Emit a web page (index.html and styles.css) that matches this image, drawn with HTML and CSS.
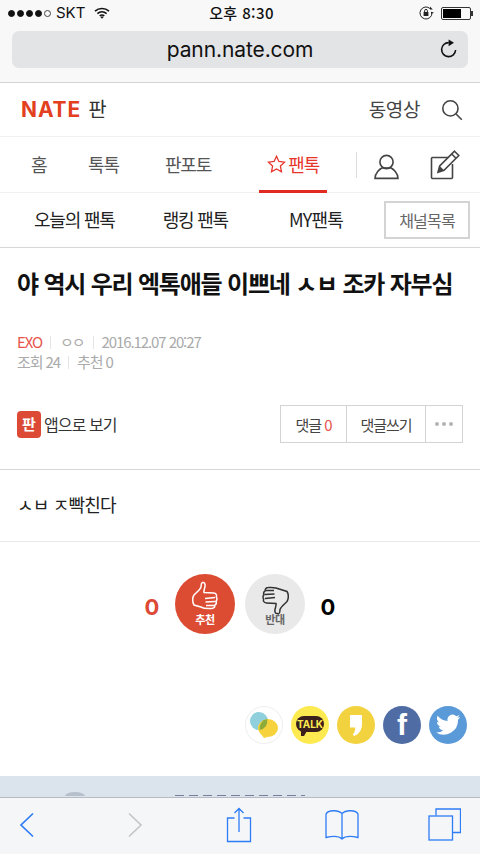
FILE: index.html
```html
<!DOCTYPE html>
<html lang="ko">
<head>
<meta charset="utf-8">
<title>pann.nate.com</title>
<link rel="stylesheet" href="styles.css">
</head>
<body>
<div class="screen">
  <div class="chrome">
    <div class="status">
      <div class="status-left">
        <span class="dots"><i></i><i></i><i></i><i></i><i class="off"></i></span>
        <span class="carrier">SKT</span>
        <svg class="wifi" width="16" height="12" viewBox="0 0 16 12"><path d="M1 4.200C5 .6 11 .6 15 4.200M3.400 6.600c2.700-2.300 6.500-2.300 9.200 0M5.700 8.900c1.400-1.100 3.200-1.100 4.600 0" fill="none" stroke="#111" stroke-width="1.600"/><path d="M8 11.800 6.400 10c1-.6 2.200-.6 3.200 0z" fill="#111"/></svg>
      </div>
      <div class="status-time">오후 8:30</div>
      <div class="status-right">
        <svg width="16" height="14" viewBox="0 0 16 14"><path d="M13 7a6 6 0 1 1-1.800-4.300" fill="none" stroke="#222" stroke-width="1"/><path d="M11 .6v3h2.800zM12 8l3-1.600-3-.6z" fill="#222"/><rect x="4.600" y="6" width="4.800" height="4" fill="#222"/><path d="M5.600 6V4.800a1.400 1.400 0 0 1 2.800 0V6" fill="none" stroke="#222"/></svg>
        <span class="battery"><span class="battery-fill"></span></span>
      </div>
    </div>
    <div class="urlbar">
      <span class="url">pann.nate.com</span>
      <svg class="reload" width="18" height="20" viewBox="0 0 18 20"><path d="M15.600 11a7 7 0 1 1-6.800-7.400" fill="none" stroke="#111" stroke-width="1.600"/><path d="M8.600 .4 14 3.800 8.600 7.200z" fill="#111"/></svg>
    </div>
  </div>

  <header class="top">
    <div class="brand"><span class="logo">NATE</span><span class="brand-name">판</span></div>
    <div class="top-right">
      <span class="video">동영상</span>
      <svg width="22" height="22" viewBox="0 0 22 22"><circle cx="9.400" cy="9.400" r="7.600" fill="none" stroke="#444" stroke-width="1.600"/><path d="m14.800 14.800 6 6" stroke="#444" stroke-width="1.600"/></svg>
    </div>
  </header>

  <nav class="gnb">
    <a class="gnb-item gnb-home">홈</a>
    <a class="gnb-item gnb-talk">톡톡</a>
    <a class="gnb-item gnb-photo">판포토</a>
    <a class="gnb-item gnb-fan">
      <svg width="19" height="18" viewBox="0 0 19 18"><path d="m9.500 1.300 2.400 5.200 5.700.7-4.200 3.900 1.100 5.600-5-2.800-5 2.800 1.100-5.600L1.400 7.200l5.700-.7z" fill="none" stroke="#e8352b" stroke-width="1.300"/></svg>
      <span>팬톡</span>
    </a>
    <span class="gnb-sep"></span>
    <svg class="gnb-user" width="25" height="26" viewBox="0 0 25 26"><circle cx="12.500" cy="8" r="6.600" fill="none" stroke="#444" stroke-width="1.600"/><path d="M1 24.400c0-5.600 5-9.400 6.800-10.400h9.400c1.800 1 6.800 4.800 6.800 10.400z" fill="none" stroke="#444" stroke-width="1.600"/></svg>
    <svg class="gnb-edit" width="30" height="30" viewBox="0 0 30 30"><path d="M18 7.500H2.500a1 1 0 0 0-1 1v19a1 1 0 0 0 1 1h19a1 1 0 0 0 1-1V14" fill="none" stroke="#444" stroke-width="1.600"/><path d="m24.500 1.200 4.300 4.300-14.800 14.800-6 2 1.700-6.300zM21.700 4l4.300 4.300" fill="none" stroke="#444" stroke-width="1.600"/><path d="m8 22.300 1.700-6.300 4.300 4.300z" fill="#444"/></svg>
  </nav>

  <nav class="sub">
    <a class="sub-item sub-today">오늘의 팬톡</a>
    <a class="sub-item sub-rank">랭킹 팬톡</a>
    <a class="sub-item sub-my">MY팬톡</a>
    <a class="channel">채널목록</a>
  </nav>

  <main>
    <h1 class="title">야 역시 우리 엑톡애들 이쁘네 ㅅㅂ 조카 자부심</h1>
    <div class="meta">
      <div class="meta-line"><span class="cat">EXO</span><i></i><span class="author">ㅇㅇ</span><i></i><span>2016.12.07 20:27</span></div>
      <div class="meta-line"><span>조회 24</span><i></i><span>추천 0</span></div>
    </div>
    <div class="actions">
      <div class="app">
        <span class="app-icon">판</span>
        <span>앱으로 보기</span>
      </div>
      <div class="btns">
        <a class="btn btn-count">댓글 <em>0</em></a>
        <a class="btn btn-write">댓글쓰기</a>
        <a class="btn btn-more"><i></i><i></i><i></i></a>
      </div>
    </div>
    <div class="body-text">ㅅㅂ ㅈ빡친다</div>
    <div class="vote">
      <span class="vote-num up">0</span>
      <div class="vote-btn vote-up">
        <svg width="28" height="34" viewBox="0 0 28 34"><path d="M11.500 1.500c2-.5 3 1.500 2.500 4-.4 2-1.400 4-1 6l9.500.5c3 .2 3.500 2.500 2.800 4 1.200 1.500.7 3.500-.3 4.300.8 1.700 0 3.200-1.200 3.900.2 2-1 3.200-3 3.300-4 .3-8 .3-11-1.500L3 24c-2-3-1.500-8 0-10 3-3 6-5 7-8 .4-1.500-.5-4 1.500-4.500z" fill="none" stroke="#fff" stroke-width="1.500"/><path d="M14 17.500l10-1M14.500 21l10-.5M15 24.500l8.500 0" fill="none" stroke="#fff" stroke-width="1.300"/></svg>
        <span>추천</span>
      </div>
      <div class="vote-btn vote-down">
        <svg width="28" height="34" viewBox="0 0 28 34"><path d="M16.500 32.500c-2 .5-3-1.500-2.500-4 .4-2 1.400-4 1-6l-9.500-.5c-3-.2-3.500-2.500-2.800-4-1.200-1.500-.7-3.500.3-4.300-.8-1.700 0-3.200 1.200-3.900-.2-2 1-3.200 3-3.300 4-.3 8-.3 11 1.500l7.800 2.500c2 3 1.500 8 0 10-3 3-6 5-7 8-.4 1.500.5 4-1.500 4.500z" fill="none" stroke="#333" stroke-width="1.500"/><path d="M14 16.500l-10 1M13.500 13l-10 .5M13 9.500l-8.500 0" fill="none" stroke="#333" stroke-width="1.300"/></svg>
        <span>반대</span>
      </div>
      <span class="vote-num down">0</span>
    </div>
    <div class="share">
      <span class="sns sns-msg"><svg width="30" height="28" viewBox="0 0 30 28"><circle cx="10" cy="10" r="9" fill="#8fd0dc"/><ellipse cx="19" cy="17" rx="10" ry="9" fill="#f6d33c"/><path d="M12 23l3 4 4-1z" fill="#f6d33c"/><path d="M10.600 19a9 9 0 0 0 7.500-10.900 9.400 9.400 0 0 0-7.500 10.900z" fill="#8cab3a"/></svg></span>
      <span class="sns sns-kakao"><span class="talk">TALK</span></span>
      <span class="sns sns-quote"><svg width="12" height="21" viewBox="0 0 12 21"><path d="M0 0H12V9C12 15 9 19 4 21L2.800 19.400C4.500 17.500 5.300 15.500 5.300 12.500H0z" fill="#fff"/></svg></span>
      <span class="sns sns-fb">f</span>
      <span class="sns sns-tw"><svg width="26" height="22" viewBox="0 0 26 22"><path d="M25 3c-.9.400-1.900.7-2.800.8 1-.6 1.800-1.600 2.200-2.700-1 .6-2 1-3.100 1.200A5 5 0 0 0 12.700 7C8.600 6.800 5 4.800 2.600 1.800 1.300 4 2 6.900 4.100 8.300c-.8 0-1.500-.2-2.200-.6 0 2.400 1.700 4.500 4 5-.7.200-1.500.2-2.200.1.600 2 2.500 3.400 4.600 3.500A10 10 0 0 1 1 18.400 14.300 14.300 0 0 0 23 5.800c1-.7 1.700-1.700 2-2.800z" fill="#fff"/></svg></span>
    </div>
    <div class="ad"><span class="ad-emblem"></span><span class="ad-line"></span></div>
  </main>

  <footer class="toolbar">
    <svg class="tb-back" width="16" height="26" viewBox="0 0 16 26"><path d="M14 1.500 2 13l12 11.500" fill="none" stroke="#2e7cf6" stroke-width="1.700"/></svg>
    <svg class="tb-fwd" width="16" height="26" viewBox="0 0 16 26"><path d="m2 1.500 12 11.500L2 24.500" fill="none" stroke="#c4c6c8" stroke-width="1.700"/></svg>
    <svg class="tb-share" width="26" height="36" viewBox="0 0 26 36"><path d="M8.500 11H1.500v23.500h23V11h-7M13 25V1.500M8.500 6 13 1.500 17.500 6" fill="none" stroke="#2e7cf6" stroke-width="1.300"/></svg>
    <svg class="tb-book" width="34" height="32" viewBox="0 0 34 32"><path d="M17 30c-3-3-10-3-16-1.500V5C3 1 13 .5 17 4.500 21 .5 31 1 33 5v23.500C27 27 20 27 17 30zM17 4.500V30" fill="none" stroke="#2e7cf6" stroke-width="1.300"/></svg>
    <svg class="tb-tabs" width="33" height="33" viewBox="0 0 33 33"><path d="M8 7.500V1h24.500v23.500H25" fill="none" stroke="#2e7cf6" stroke-width="1.300"/><rect x="1" y="8" width="23.500" height="24" fill="none" stroke="#2e7cf6" stroke-width="1.300"/></svg>
  </footer>
</div>
</body>
</html>
```

FILE: styles.css
```css
* { box-sizing: border-box; }
html, body { margin: 0; padding: 0; }
body { background: #fff; font-family: "Noto Sans CJK KR", "Noto Sans", sans-serif; color: #222; }
a { color: inherit; text-decoration: none; }
i, em { font-style: normal; }
.screen { position: relative; width: 480px; height: 854px; overflow: hidden; background: #fff; }

.chrome { height: 83px; background: #f8f8f8; border-bottom: 1px solid #d4d4d4; padding: 0 12px; }
.status { position: relative; height: 31px; display: flex; justify-content: space-between; align-items: center; margin: 0 -4px; padding-bottom: 5px; }
.status-left { display: flex; align-items: center; gap: 4px; }
.dots { display: flex; gap: 2px; }
.dots i { width: 7px; height: 7px; border-radius: 50%; background: #111; border: 1px solid #111; }
.dots i.off { background: transparent; border-color: #444; }
.carrier { font: 15px/18px "Inter", "Liberation Sans", sans-serif; color: #111; margin-left: 1px; }
.wifi { margin-left: 5px; }
.status-time { position: absolute; left: 3px; right: 0; text-align: center; font-size: 15px; line-height: 20px; font-weight: 500; color: #111; top: 3px; letter-spacing: .4px; }
.status-right { display: flex; align-items: center; gap: 6px; margin-right: -1px; position: relative; }
.battery { display: block; position: relative; width: 30px; height: 13px; border: 1px solid #333; border-radius: 2px; padding: 1px; margin-right: 2px; }
.battery::after { content: ""; position: absolute; right: -3px; top: 3px; width: 2px; height: 5px; background: #333; }
.battery-fill { display: block; width: 18px; height: 100%; background: #000; }
.urlbar { position: relative; height: 37px; background: #e3e4e6; border-radius: 7px; display: flex; align-items: center; justify-content: center; }
.url { font: 21px/26px "Inter", "Liberation Sans", sans-serif; color: #111; letter-spacing: -.1px; }
.reload { position: absolute; right: 10px; top: 8px; }

.top { height: 54px; display: flex; justify-content: space-between; align-items: center; padding: 0 17px 0 21px; border-bottom: 1px solid #f0f0f0; }
.brand { display: flex; align-items: center; gap: 7px; }
.logo { font: 700 21px/24px "Inter", "Liberation Sans", sans-serif; color: #e2401f; letter-spacing: .9px; }
.brand-name { font-size: 20px; line-height: 24px; color: #333; margin-top: -2px; }
.top-right { display: flex; align-items: center; gap: 21px; }
.video { font-size: 19px; line-height: 24px; letter-spacing: -.4px; color: #444; margin-top: -2px; }

.gnb { position: relative; height: 56px; display: flex; align-items: center; border-bottom: 1px solid #f0f0f0; white-space: nowrap; }
.gnb > * { flex-shrink: 0; }
.gnb-item { font-size: 18px; line-height: 24px; letter-spacing: -1.1px; color: #555; display: flex; align-items: center; padding-bottom: 2px; }
.gnb-home { margin-left: 31px; }
.gnb-talk { margin-left: 41.5px; }
.gnb-photo { margin-left: 46px; }
.gnb-fan { position: relative; margin-left: 56px; gap: 2px; color: #e8352b; height: 100%; padding-bottom: 2px; }
.gnb-fan::after { content: ""; position: absolute; left: -8px; right: -8px; bottom: -1px; height: 3px; background: #e02a22; }
.gnb-sep { width: 1px; height: 26px; background: #ddd; margin-left: 37px; }
.gnb-user { margin-left: 17px; margin-top: 4px; }
.gnb-edit { margin-left: 31px; margin-top: 1px; }

.sub { position: relative; height: 55px; display: flex; align-items: center; border-bottom: 1px solid #d8d8d8; white-space: nowrap; }
.sub > * { flex-shrink: 0; }
.sub-item { font-size: 18px; line-height: 24px; letter-spacing: -1.2px; color: #222; padding-bottom: 2px; }
.sub-today { margin-left: 34px; }
.sub-rank { margin-left: 48px; }
.sub-my { margin-left: 61px; letter-spacing: -.8px; }
.channel { margin-left: 41px; width: 86px; height: 38px; border: 2px solid #d4d4d4; text-align: center; font-size: 16px; line-height: 34px; letter-spacing: -.8px; color: #666; }

.title { margin: 0; padding: 19px 17px 0; height: 84px; font-size: 24px; line-height: 32px; font-weight: 700; letter-spacing: -1.2px; color: #111; white-space: nowrap; }
.meta { height: 61px; padding-left: 17px; font-size: 15px; line-height: 20px; letter-spacing: -1.1px; color: #aaa; }
.meta-line { display: flex; align-items: center; }
.meta-line i { width: 1px; height: 13px; background: #e4e4e4; margin: 0 8px; }
.cat { color: #e8544c; }
.author { letter-spacing: -2px; margin: 0 1px; }
.actions { height: 77px; border-bottom: 1px solid #d8d8d8; display: flex; justify-content: space-between; padding: 12px 17px 0; }
.app { display: flex; align-items: center; gap: 3px; height: 38px; font-size: 16px; letter-spacing: -.9px; color: #333; }
.app-icon { width: 24px; height: 27px; border-radius: 4px; background: #dc4a35; color: #fff; font-size: 15px; font-weight: 700; text-align: center; line-height: 26px; letter-spacing: 0; }
.btns { display: flex; height: 38px; border: 1px solid #d4d4d4; font-size: 15px; letter-spacing: -1px; color: #444; }
.btn { display: flex; align-items: center; justify-content: center; height: 100%; }
.btn em { color: #e8544c; margin-left: 3px; }
.btn-count { width: 65px; }
.btn-write { width: 79px; border-left: 1px solid #d4d4d4; }
.btn-more { width: 37px; border-left: 1px solid #d4d4d4; gap: 3px; }
.btn-more i { width: 4px; height: 4px; border-radius: 50%; background: #b4b4b4; }
.body-text { height: 72px; border-bottom: 1px solid #e8e8e8; padding-left: 17px; font-size: 18px; line-height: 68px; letter-spacing: -.8px; color: #222; }
.vote { height: 134px; display: flex; justify-content: center; align-items: flex-start; padding-top: 32px; }
.vote-num { font: 700 22px/66px "Inter", "Liberation Sans", sans-serif; width: 20px; text-align: center; }
.vote-num.up { color: #dc4a35; margin-right: 13px; }
.vote-num.down { color: #000; margin-left: 13px; }
.vote-btn { width: 60px; height: 60px; border-radius: 50%; display: flex; flex-direction: column; align-items: center; font-size: 11px; line-height: 14px; font-weight: 700; letter-spacing: -.3px; padding-top: 7px; }
.vote-up { background: #dc4c33; color: #fff; margin-right: 10px; }
.vote-down { background: #e9e9e9; color: #666; }
.vote-btn span { margin-top: -3px; }
.share { height: 100px; display: flex; justify-content: flex-end; gap: 8px; padding: 30px 13px 0 0; }
.sns { width: 38px; height: 38px; border-radius: 50%; display: flex; align-items: center; justify-content: center; }
.sns-msg { background: #fff; border: 1px solid #eee; }
.sns-kakao { background: #fdea50; }
.talk { position: relative; background: #3a1f1d; color: #fdea50; font: 700 10px/16px "Inter", "Liberation Sans", sans-serif; border-radius: 9px; width: 28px; text-align: center; margin-top: -3px; }
.talk::after { content: ""; position: absolute; left: 5px; bottom: -4px; border-left: 3px solid #3a1f1d; border-right: 3px solid transparent; border-top: 5px solid #3a1f1d; }
.sns-quote { background: #f2d23f; }
.sns-fb { background: #4f6ca4; color: #fff; font: 700 30px/38px "Liberation Sans", sans-serif; }
.sns-tw { background: #5b9ad8; }
.ad { height: 40px; background: #dbe4ec; display: flex; align-items: flex-end; padding: 0 0 20px 65px; }
.ad-emblem { width: 20px; height: 4px; border-radius: 50% 50% 0 0 / 100% 100% 0 0; background: #b6c0cc; }
.ad-line { width: 130px; height: 1px; margin-left: 90px; background: repeating-linear-gradient(90deg, #75819a 0 9px, transparent 9px 14px); }

.toolbar { position: absolute; left: 0; right: 0; bottom: 0; height: 57px; background: #f5f6f8; border-top: 1px solid #b8bcc2; display: flex; align-items: center; padding: 0 0 3px 19px; }
.tb-fwd { margin-left: 92px; }
.tb-share { margin-left: 83px; }
.tb-book { margin-left: 73px; }
.tb-tabs { margin-left: 69px; }
```
